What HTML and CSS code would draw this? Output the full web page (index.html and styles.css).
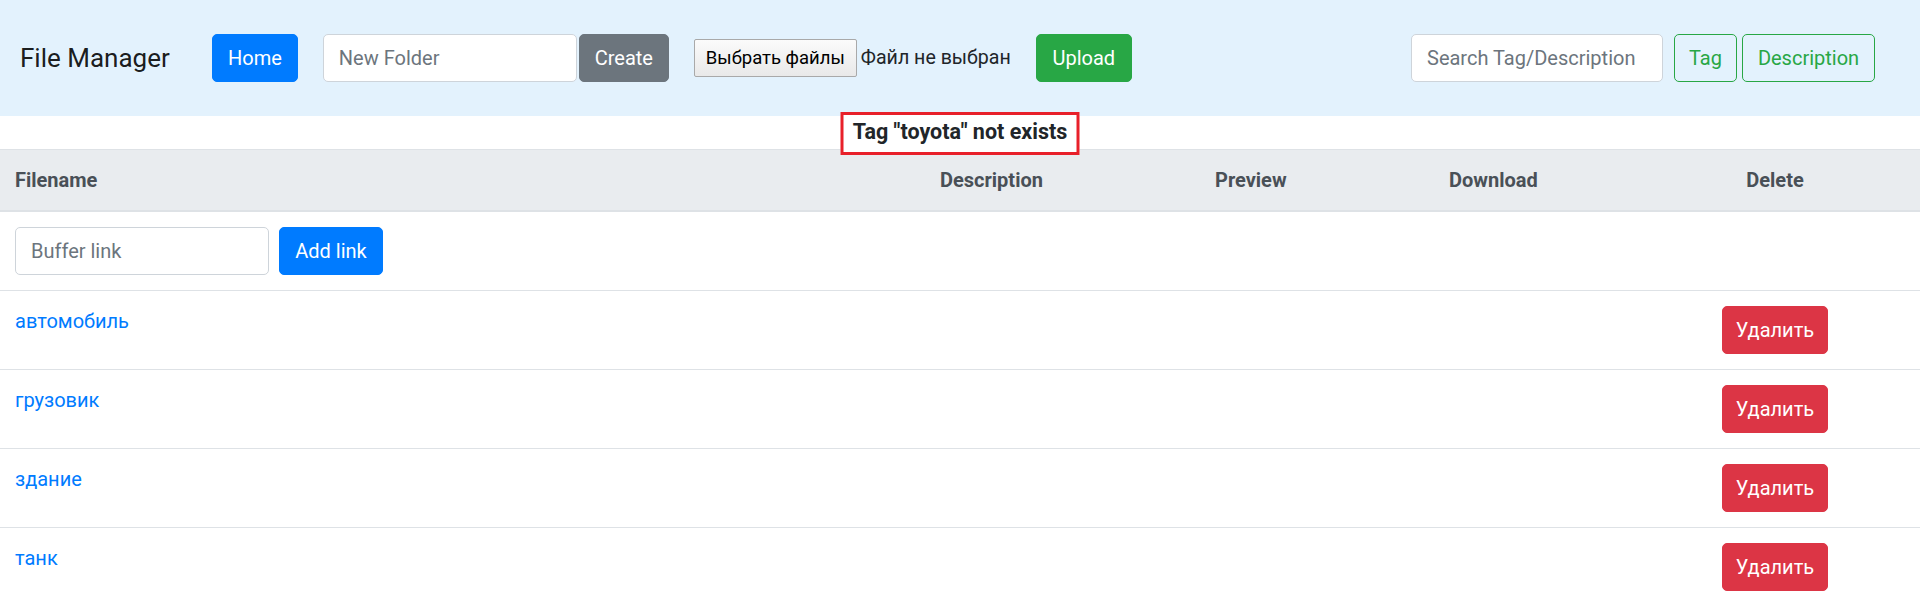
FILE: index.html
```html
<!DOCTYPE html>
<html lang="ru">
<head>
<meta charset="utf-8">
<title>File Manager</title>
<link rel="stylesheet" href="styles.css">
</head>
<body>
<nav class="navbar">
  <span class="brand">File Manager</span>
  <button class="btn btn-primary">Home</button>
  <form class="group folder-form">
    <input class="form-control folder-input" type="text" placeholder="New Folder">
    <button class="btn btn-secondary create-btn" type="button">Create</button>
  </form>
  <form class="group upload-form">
    <span class="file-btn">Выбрать файлы</span>
    <span class="file-status">Файл не выбран</span>
    <button class="btn btn-success upload-btn" type="button">Upload</button>
  </form>
  <form class="group search-form">
    <input class="form-control search-input" type="text" placeholder="Search Tag/Description">
    <button class="btn btn-outline-success tag-btn" type="button">Tag</button>
    <button class="btn btn-outline-success desc-btn" type="button">Description</button>
  </form>
</nav>
<div class="message-strip">
  <div class="message">Tag "toyota" not exists</div>
</div>
<table class="table">
  <thead>
    <tr>
      <th class="col-name">Filename</th>
      <th class="col-desc">Description</th>
      <th class="col-prev">Preview</th>
      <th class="col-down">Download</th>
      <th class="col-del">Delete</th>
    </tr>
  </thead>
  <tbody>
    <tr>
      <td class="link-cell"><input class="form-control buffer-input" type="text" placeholder="Buffer link"><button class="btn btn-primary add-btn" type="button">Add link</button></td>
      <td></td><td></td><td></td><td></td>
    </tr>
    <tr>
      <td><a href="#">автомобиль</a></td>
      <td></td><td></td><td></td>
      <td class="col-del"><button class="btn btn-danger" type="button">Удалить</button></td>
    </tr>
    <tr>
      <td><a href="#">грузовик</a></td>
      <td></td><td></td><td></td>
      <td class="col-del"><button class="btn btn-danger" type="button">Удалить</button></td>
    </tr>
    <tr>
      <td><a href="#">здание</a></td>
      <td></td><td></td><td></td>
      <td class="col-del"><button class="btn btn-danger" type="button">Удалить</button></td>
    </tr>
    <tr>
      <td><a href="#">танк</a></td>
      <td></td><td></td><td></td>
      <td class="col-del"><button class="btn btn-danger" type="button">Удалить</button></td>
    </tr>
  </tbody>
</table>
</body>
</html>
```
FILE: styles.css
```css
* { box-sizing: border-box; }
html, body { margin: 0; padding: 0; }
body {
  font-family: Roboto, "Liberation Sans", sans-serif;
  font-size: 20px;
  line-height: 1.5;
  color: #212529;
  background: #fff;
  overflow: hidden;
}
.navbar {
  display: flex;
  align-items: center;
  height: 116px;
  padding: 0 45px 0 20px;
  background: #e3f2fd;
}
.brand {
  width: 192px;
  flex-shrink: 0;
  font-size: 26px;
  line-height: 37px;
  color: rgba(0,0,0,.9);
}
.group { display: flex; align-items: center; margin: 0; }
.btn {
  display: inline-block;
  font-family: inherit;
  font-size: 20px;
  line-height: 30px;
  padding: 8px 15px;
  border: 1px solid transparent;
  border-radius: 5px;
  cursor: pointer;
  white-space: nowrap;
}
.btn-primary { background: #007bff; border-color: #007bff; color: #fff; }
.btn-secondary { background: #6c757d; border-color: #6c757d; color: #fff; }
.btn-success { background: #28a745; border-color: #28a745; color: #fff; }
.btn-danger { background: #dc3545; border-color: #dc3545; color: #fff; }
.btn-outline-success { background: transparent; border-color: #28a745; color: #28a745; }
.form-control {
  display: block;
  height: 48px;
  padding: 8px 15px;
  font-family: inherit;
  font-size: 20px;
  line-height: 30px;
  color: #495057;
  background: #fff;
  border: 1px solid #ced4da;
  border-radius: 5px;
}
.form-control::placeholder { color: #6c757d; }
.folder-form { margin-left: 25px; }
.folder-input { width: 254px; }
.create-btn { margin-left: 2px; width: 90px; padding-left: 0; padding-right: 0; }
.upload-form { margin-left: 25px; }
.file-btn {
  display: inline-block;
  width: 163px;
  height: 38px;
  line-height: 36px;
  text-align: center;
  font-size: 18.5px;
  color: #000;
  background: linear-gradient(#fbfbfb, #e9e9e9);
  border: 1px solid #a9a9a9;
  border-radius: 2px;
  white-space: nowrap;
}
.file-status {
  width: 179px;
  padding-left: 4px;
  font-size: 19.6px;
  color: #212529;
  white-space: nowrap;
}
.upload-btn { width: 96px; padding-left: 0; padding-right: 0; }
.search-form { margin-left: auto; }
.search-input { width: 252px; }
.tag-btn { margin-left: 11px; width: 63px; padding-left: 0; padding-right: 0; }
.desc-btn { margin-left: 5px; width: 133px; padding-left: 0; padding-right: 0; }
.message-strip {
  position: relative;
  height: 33px;
  display: flex;
  justify-content: center;
}
.message {
  position: absolute;
  top: -4px;
  left: 50%;
  transform: translateX(-50%);
  width: 239px;
  height: 43px;
  border: 3px solid #e8202a;
  background: #fff;
  font-weight: 700;
  font-size: 21.5px;
  line-height: 33px;
  text-align: center;
  white-space: nowrap;
  z-index: 2;
}
.table {
  width: 100%;
  border-collapse: collapse;
  table-layout: fixed;
}
.table th, .table td {
  padding: 15px;
  vertical-align: top;
  border-top: 1px solid #dee2e6;
  text-align: left;
}
.table thead th {
  background: #e9ecef;
  color: #495057;
  font-weight: 700;
  border-bottom: 2px solid #dee2e6;
}
.col-name { width: 925px; }
.col-desc { width: 275px; }
.col-prev { width: 234px; }
.col-down { width: 196px; }
.table .col-del { text-align: center; }
.link-cell { display: flex; align-items: center; }
.table td.link-cell { border-top: none; }
.buffer-input { width: 254px; }
.add-btn { margin-left: 10px; width: 104px; padding-left: 0; padding-right: 0; }
.table td .btn-danger { width: 106px; padding-left: 0; padding-right: 0; }
a { color: #007bff; text-decoration: none; }
```
